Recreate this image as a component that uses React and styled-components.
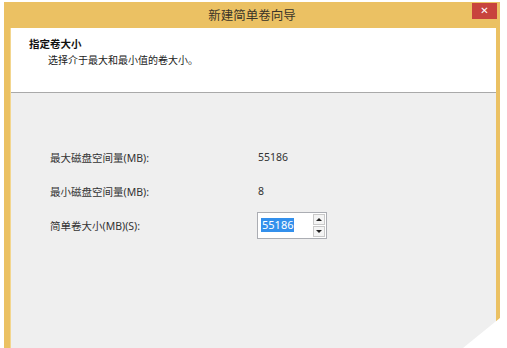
import React from "react";
import styled, { createGlobalStyle } from "styled-components";

const GlobalStyle = createGlobalStyle`
  html, body {
    margin: 0;
    padding: 0;
    background: #fff;
    overflow: hidden;
  }
  body {
    font-family: "Noto Sans", "Noto Sans CJK SC", sans-serif;
  }
`;

const Page = styled.div`
  position: relative;
  width: 507px;
  height: 348px;
  overflow: hidden;
  padding: 2px 0 0 4px;
  box-sizing: border-box;
`;

const Window = styled.div`
  width: 496px;
  height: 380px;
  background: #ebc163;
  display: flex;
  flex-direction: column;
`;

const TitleBar = styled.div`
  height: 26px;
  display: grid;
  grid-template-columns: 1fr auto 1fr;
  align-items: start;
  flex-shrink: 0;
`;

const Title = styled.div`
  grid-column: 2;
  line-height: 26px;
  font-size: 12.5px;
  color: #3a3428;
  font-family: "Noto Sans CJK SC", sans-serif;
`;

const CloseButton = styled.div`
  grid-column: 3;
  justify-self: end;
  margin: 1px 3px 0 0;
  width: 25px;
  height: 16px;
  background: #c8443d;
  color: #fff;
  display: flex;
  align-items: center;
  justify-content: center;
  font-family: "DejaVu Sans", sans-serif;
  font-size: 10px;
  font-weight: bold;
  line-height: 1;
`;

const Frame = styled.div`
  flex: 1;
  display: flex;
  padding: 0 4px 0 7px;
`;

const Client = styled.div`
  flex: 1;
  display: flex;
  flex-direction: column;
  background: #efefef;
  box-shadow: -1px 0 0 #f3d68f;
`;

const Header = styled.div`
  height: 65px;
  box-sizing: border-box;
  background: #fff;
  border-bottom: 1px solid #a9a9a9;
  padding: 9px 0 0 18px;
  font-family: "Noto Sans CJK SC", sans-serif;
`;

const Heading = styled.div`
  font-size: 10.5px;
  line-height: 14px;
  font-weight: bold;
  color: #111;
`;

const Subtitle = styled.div`
  margin-top: 2px;
  padding-left: 19px;
  font-size: 10px;
  line-height: 14px;
  color: #222;
`;

const Body = styled.div`
  flex: 1;
  padding: 47px 0 0 39px;
  display: grid;
  grid-template-columns: 208px 1fr;
  grid-auto-rows: 34px;
  align-content: start;
  align-items: center;
  font-size: 10.5px;
  color: #333;
`;

const Label = styled.div`
  font-family: "Noto Sans", "Noto Sans CJK SC", sans-serif;
`;

const Value = styled.div`
  font-family: "Noto Sans", sans-serif;
`;

const Spin = styled.div`
  margin-left: -1px;
  width: 70px;
  height: 27px;
  box-sizing: border-box;
  background: #fff;
  border: 1px solid #abadb3;
  display: flex;
  align-items: center;
  padding: 0 1px 0 3px;
`;

const Selected = styled.span`
  background: #3390ec;
  color: #fff;
  font-size: 11px;
  line-height: 14px;
  padding: 0 1px;
`;

const Arrows = styled.div`
  margin-left: auto;
  display: flex;
  flex-direction: column;
  gap: 1px;
`;

const Arrow = styled.div`
  width: 12px;
  height: 11px;
  box-sizing: border-box;
  border: 1px solid #c9c9c9;
  background: #f4f4f4;
  display: flex;
  align-items: center;
  justify-content: center;
`;

const Tri = styled.div`
  width: 0;
  height: 0;
  border-left: 3px solid transparent;
  border-right: 3px solid transparent;
  ${(p) =>
    p.$down
      ? "border-top: 3px solid #222;"
      : "border-bottom: 3px solid #222;"}
`;

const Fold = styled.div`
  position: absolute;
  right: 0;
  bottom: 0;
  width: 44px;
  height: 30px;
  background: #fff;
  clip-path: polygon(0 100%, 84% 0, 100% 0, 100% 100%);
`;

const rows = [
  { label: "最大磁盘空间量(MB):", value: "55186" },
  { label: "最小磁盘空间量(MB):", value: "8" },
];

export default function App() {
  return (
    <>
      <GlobalStyle />
      <Page>
        <Window>
          <TitleBar>
            <Title>新建简单卷向导</Title>
            <CloseButton>✕</CloseButton>
          </TitleBar>
          <Frame>
            <Client>
              <Header>
                <Heading>指定卷大小</Heading>
                <Subtitle>选择介于最大和最小值的卷大小。</Subtitle>
              </Header>
              <Body>
                {rows.map((r) => (
                  <React.Fragment key={r.label}>
                    <Label>{r.label}</Label>
                    <Value>{r.value}</Value>
                  </React.Fragment>
                ))}
                <Label>简单卷大小(MB)(S):</Label>
                <Spin>
                  <Selected>55186</Selected>
                  <Arrows>
                    <Arrow>
                      <Tri />
                    </Arrow>
                    <Arrow>
                      <Tri $down />
                    </Arrow>
                  </Arrows>
                </Spin>
              </Body>
            </Client>
          </Frame>
        </Window>
        <Fold />
      </Page>
    </>
  );
}
